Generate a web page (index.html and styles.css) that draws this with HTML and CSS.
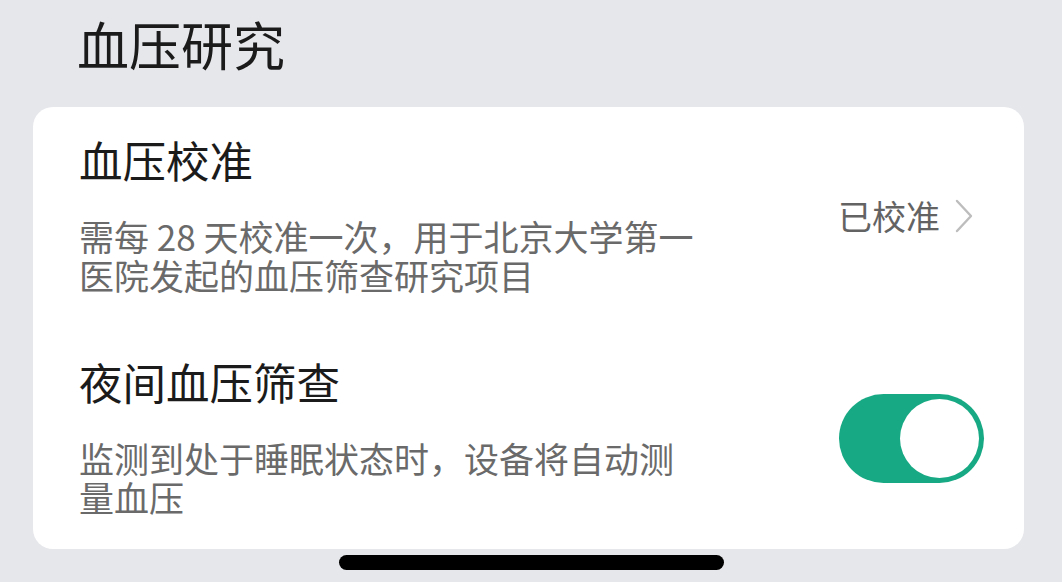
FILE: index.html
```html
<!DOCTYPE html>
<html lang="zh-CN">
<head>
    <meta charset="UTF-8">
    <meta name="viewport" content="width=device-width, initial-scale=1.0">
    <title>血压研究</title>
    <link rel="stylesheet" href="styles.css">
</head>
<body>
    <h1 class="page-title">血压研究</h1>

    <div class="card">
        <div class="row">
            <div class="row-text">
                <div class="row-title">血压校准</div>
                <div class="row-desc">需每 28 天校准一次，用于北京大学第一医院发起的血压筛查研究项目</div>
            </div>
            <div class="row-action">
                <span class="status">已校准</span>
                <svg class="chevron" width="24" height="34" viewBox="0 0 24 34">
                    <path d="M4 2 L18 17 L4 32" fill="none" stroke="#bdbdbd" stroke-width="2.4" stroke-linecap="round" stroke-linejoin="round"/>
                </svg>
            </div>
        </div>

        <div class="row">
            <div class="row-text">
                <div class="row-title">夜间血压筛查</div>
                <div class="row-desc">监测到处于睡眠状态时，设备将自动测量血压</div>
            </div>
            <div class="toggle on" onclick="this.classList.toggle('on')">
                <div class="knob"></div>
            </div>
        </div>
    </div>

    <div class="home-bar"></div>
</body>
</html>
```

FILE: styles.css
```css
body {
    margin: 0;
    background-color: #e6e7eb;
    font-family: "Noto Sans CJK SC", "Noto Sans", sans-serif;
    color: #1b1b1b;
}
.page-title {
    margin: 0;
    padding: 14px 0 0 77px;
    height: 60px;
    line-height: 60px;
    font-size: 52px;
    font-weight: 400;
    margin-bottom: 33px;
}
.card {
    background-color: #ffffff;
    border-radius: 20px;
    margin: 0 38px 0 33px;
    padding: 27px 40px 33px 46px;
    display: flex;
    flex-direction: column;
    gap: 62px;
}
.row {
    display: flex;
    align-items: center;
    justify-content: space-between;
}
.row-text {
    width: 625px;
}
.row-title {
    font-size: 43.5px;
    line-height: 52px;
    margin-bottom: 30px;
}
.row-desc {
    font-size: 35px;
    line-height: 39px;
    color: #6a6a6a;
}
.row-action {
    display: flex;
    align-items: center;
    gap: 13px;
    margin-top: 4px;
}
.status {
    font-size: 34px;
    line-height: 40px;
    color: #636363;
}
.chevron {
    display: block;
    margin-right: 7px;
}
.toggle {
    width: 145px;
    height: 89px;
    border-radius: 45px;
    background-color: #cfd0d4;
    box-sizing: border-box;
    padding: 5px;
    display: flex;
    cursor: pointer;
    margin-top: 4px;
    transition: background-color 0.2s ease;
}
.toggle.on {
    background-color: #17a983;
    justify-content: flex-end;
}
.knob {
    width: 79px;
    height: 79px;
    border-radius: 50%;
    background-color: #ffffff;
}
.home-bar {
    width: 385px;
    height: 15px;
    border-radius: 8px;
    background-color: #000000;
    margin: 6px auto 0;
}
```
